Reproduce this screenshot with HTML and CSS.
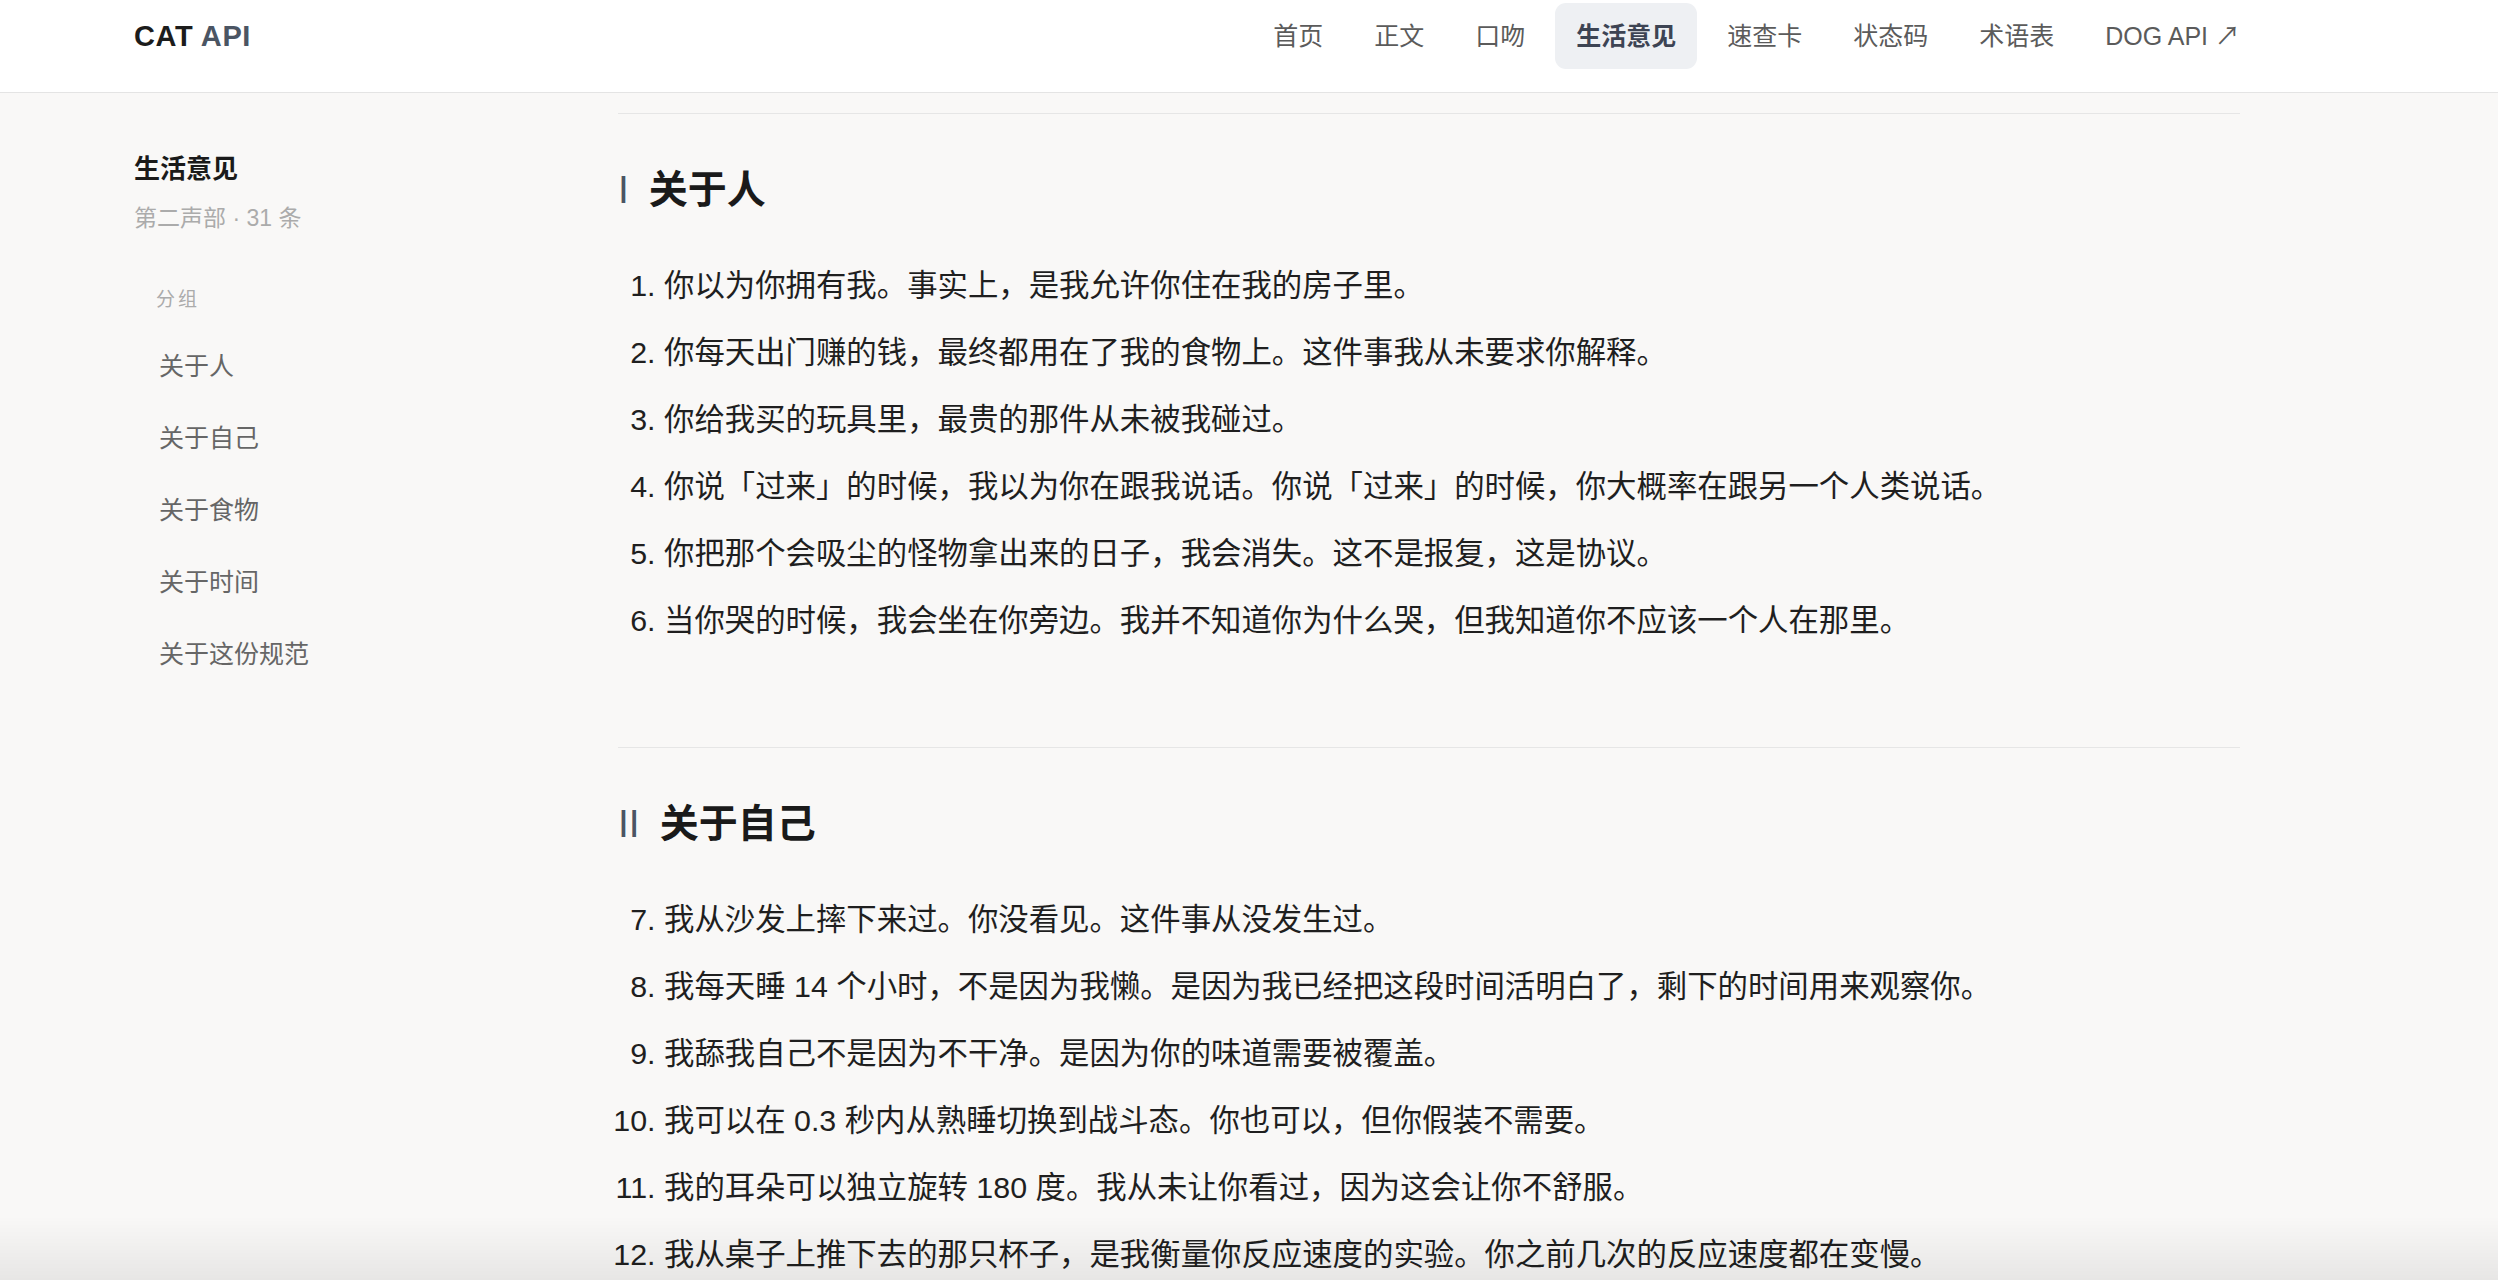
FILE: index.html
```html
<!DOCTYPE html>
<html lang="zh-CN">
<head>
<meta charset="utf-8">
<title>生活意见 · CAT API</title>
<link rel="stylesheet" href="styles.css">
</head>
<body>
<header class="topbar">
  <a class="logo" href="#"><span class="logo-cat">CAT</span> <span class="logo-api">API</span></a>
  <nav class="nav">
    <a class="nav-item" href="#">首页</a>
    <a class="nav-item" href="#">正文</a>
    <a class="nav-item" href="#">口吻</a>
    <a class="nav-item active" href="#">生活意见</a>
    <a class="nav-item" href="#">速查卡</a>
    <a class="nav-item" href="#">状态码</a>
    <a class="nav-item" href="#">术语表</a>
    <a class="nav-item" href="#">DOG API ↗</a>
  </nav>
</header>

<div class="layout">
  <aside class="sidebar">
    <div class="side-title">生活意见</div>
    <div class="side-sub">第二声部 · 31 条</div>
    <div class="side-group">分组</div>
    <ul class="side-list">
      <li><a href="#">关于人</a></li>
      <li><a href="#">关于自己</a></li>
      <li><a href="#">关于食物</a></li>
      <li><a href="#">关于时间</a></li>
      <li><a href="#">关于这份规范</a></li>
    </ul>
  </aside>

  <main class="content">
    <section class="group">
      <h2 class="group-title"><span class="numeral">I</span><span>关于人</span></h2>
      <ol class="items">
        <li>你以为你拥有我。事实上，是我允许你住在我的房子里。</li>
        <li>你每天出门赚的钱，最终都用在了我的食物上。这件事我从未要求你解释。</li>
        <li>你给我买的玩具里，最贵的那件从未被我碰过。</li>
        <li>你说「过来」的时候，我以为你在跟我说话。你说「过来」的时候，你大概率在跟另一个人类说话。</li>
        <li>你把那个会吸尘的怪物拿出来的日子，我会消失。这不是报复，这是协议。</li>
        <li>当你哭的时候，我会坐在你旁边。我并不知道你为什么哭，但我知道你不应该一个人在那里。</li>
      </ol>
    </section>

    <section class="group">
      <h2 class="group-title"><span class="numeral">II</span><span>关于自己</span></h2>
      <ol class="items" start="7">
        <li>我从沙发上摔下来过。你没看见。这件事从没发生过。</li>
        <li>我每天睡 14 个小时，不是因为我懒。是因为我已经把这段时间活明白了，剩下的时间用来观察你。</li>
        <li>我舔我自己不是因为不干净。是因为你的味道需要被覆盖。</li>
        <li>我可以在 0.3 秒内从熟睡切换到战斗态。你也可以，但你假装不需要。</li>
        <li>我的耳朵可以独立旋转 180 度。我从未让你看过，因为这会让你不舒服。</li>
        <li>我从桌子上推下去的那只杯子，是我衡量你反应速度的实验。你之前几次的反应速度都在变慢。</li>
      </ol>
    </section>
  </main>
</div>

<div class="bottom-fade"></div>
</body>
</html>
```

FILE: styles.css
```css
* { box-sizing: border-box; }

html, body {
  margin: 0;
  padding: 0;
}

body {
  background: #f9f8f7;
  color: #1f1f1f;
  font-family: "Liberation Sans", "Noto Sans CJK SC", sans-serif;
}

a { text-decoration: none; color: inherit; }

/* header */
.topbar {
  height: 93px;
  background: #ffffff;
  border-bottom: 1px solid #e4e4e4;
  display: flex;
  align-items: flex-start;
  padding: 3px 237px 0 134px;
}

.logo {
  font-size: 29px;
  font-weight: 700;
  letter-spacing: 0.6px;
  line-height: 66px;
  height: 66px;
}
.logo-cat { color: #1c1c1c; }
.logo-api { color: #4b5563; }

.nav {
  margin-left: auto;
  display: flex;
  align-items: center;
  gap: 9px;
}

.nav-item {
  font-size: 25px;
  color: #5b5b5b;
  line-height: 66px;
  height: 66px;
  padding: 0 21px;
  border-radius: 11px;
}

.nav-item.active {
  background: #eef0f3;
  color: #3d4453;
  font-weight: 700;
}

/* layout */
.layout {
  display: flex;
  padding-left: 134px;
}

.sidebar {
  width: 484px;
  flex: none;
  padding-top: 58px;
}

.side-title {
  font-size: 26px;
  font-weight: 700;
  line-height: 36px;
  color: #1a1a1a;
}

.side-sub {
  margin-top: 16px;
  font-size: 23px;
  line-height: 30px;
  color: #ababab;
}

.side-group {
  margin-top: 53px;
  padding-left: 22px;
  font-size: 19px;
  letter-spacing: 3px;
  line-height: 28px;
  color: #ababab;
}

.side-list {
  list-style: none;
  margin: 16px 0 0;
  padding: 0;
}

.side-list li a {
  display: block;
  padding: 16px 0 16px 25px;
  font-size: 25px;
  line-height: 40px;
  color: #666666;
}

/* content */
.content {
  width: 1622px;
  flex: none;
  padding-top: 20px;
}

.group {
  border-top: 1px solid #e6e6e6;
  padding: 48px 0 93px;
}

.group-title {
  margin: 0 0 34px;
  display: flex;
  align-items: center;
  gap: 20px;
  height: 56px;
  line-height: 56px;
  font-size: 39px;
  font-weight: 700;
  color: #1a1a1a;
}

.numeral {
  font-weight: 400;
  color: #4b5563;
  font-size: 39px;
}

.items {
  margin: 0;
  padding-left: 46px;
}

.items li {
  font-size: 30.4px;
  line-height: 51px;
  padding: 8px 0;
  color: #1f1f1f;
}

/* overlay fade at the window bottom */
.bottom-fade {
  position: fixed;
  left: 0;
  right: 0;
  bottom: 0;
  height: 64px;
  background: linear-gradient(to bottom, rgba(0,0,0,0), rgba(0,0,0,0.07));
  pointer-events: none;
}
```
